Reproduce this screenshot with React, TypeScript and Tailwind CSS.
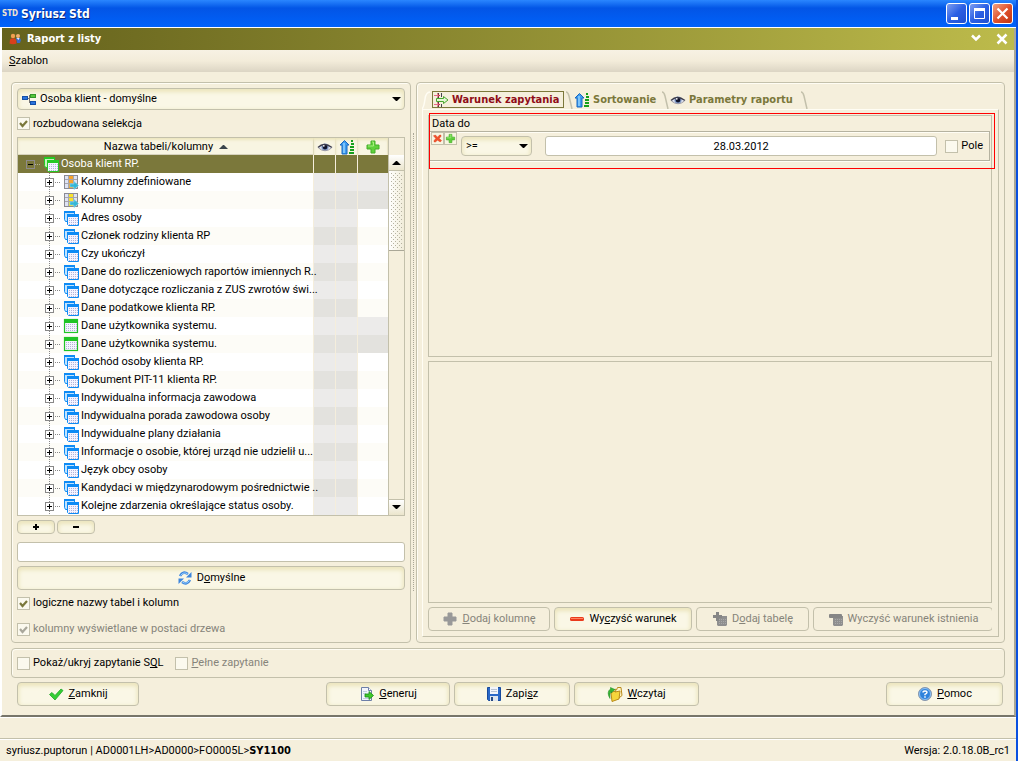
import type { ReactNode } from 'react';
import clsx from 'clsx';

type IconName =
  | 'eye' | 'sort' | 'plus' | 'plusGray' | 'minus' | 'tables' | 'tablesGreen' | 'tableGreen'
  | 'columnsOrange' | 'columnsYellow' | 'refresh' | 'check' | 'generate' | 'save' | 'folder'
  | 'help' | 'hierarchy' | 'condition' | 'tableAdd' | 'tableRemove' | 'users' | 'cross';

function Dots({ x, y, cols, rows, color }: { x: number; y: number; cols: number; rows: number; color: string }) {
  const cells: ReactNode[] = [];
  for (let r = 0; r < rows; r++) {
    for (let c = 0; c < cols; c++) {
      cells.push(<rect key={`${r}-${c}`} x={x + c * 2} y={y + r * 2} width="1" height="1" fill={color} />);
    }
  }
  return <>{cells}</>;
}

function Columns({ accent }: { accent: string }) {
  return (
    <>
      <rect x="1.5" y="1.5" width="13" height="13" fill="#dfe3f4" stroke="#8b8b93" />
      <rect x="6" y="2" width="4" height="12" fill={accent} />
      <path d="M5.5 2v12M10.5 2v12M2 5.5h12M2 9.5h12" stroke="#a6a6ae" strokeWidth="1" fill="none" />
      <path d="M7 10h4V7.500l4.500 4L11 15.500V13H7z" fill="#35b6d6" stroke="#7fdcee" strokeWidth=".6" />
    </>
  );
}

function Tables({ main, light }: { main: string; light: string }) {
  return (
    <>
      <path d="M1.500 1.500h10v10h-9l-1-2z" fill={light} stroke={main} />
      <rect x="1" y="1" width="11" height="2" fill={main} />
      <path d="M4.500 4.500h11v11h-10l-1-1z" fill="#f4f4ff" stroke={main} />
      <rect x="4" y="4" width="12" height="3" fill={main} />
      <Dots x={6} y={8} cols={5} rows={4} color="#b4b2d8" />
    </>
  );
}

function GrayTable() {
  return (
    <>
      <path d="M5 5h10v9l-1 1H6l-1-1z" fill="#8f8f8f" />
      <Dots x={7} y={8} cols={4} rows={3} color="#a8a8a8" />
    </>
  );
}

const drawings: Record<IconName, ReactNode> = {
  eye: (
    <>
      <path d="M1 8.500Q7 3 15 8.500Q8 14 1 8.500z" fill="#e4e7f2" />
      <circle cx="8" cy="8" r="3.600" fill="#7c95c4" />
      <circle cx="8" cy="8" r="2.400" fill="#10142c" />
      <path d="M1 8.500Q7 2.500 15 8.500" fill="none" stroke="#3c3c4c" strokeWidth="1.400" />
      <path d="M1.500 9Q8 14.500 14.500 9" fill="none" stroke="#9a9aa6" strokeWidth="1" />
      <circle cx="6.800" cy="6.800" r=".9" fill="#fff" />
    </>
  ),
  sort: (
    <>
      <path d="M5.500 1.500L10 6H8v9H3V6H1z" fill="#3d9cf0" stroke="#1767c0" strokeWidth="1" />
      <path d="M5 4v10" stroke="#92d2ff" strokeWidth="1.500" />
      <path d="M12 2h2M12 5h3M11 8h4M11 11h4M10 14h5" stroke="#15a01c" strokeWidth="2" />
    </>
  ),
  plus: (
    <>
      <path d="M6 2h4v4h4v4h-4v4H6v-4H2V6h4z" fill="#5fd13c" stroke="#45ad29" strokeWidth="1" strokeLinejoin="round" />
      <path d="M7 3h1.500v4H3" fill="none" stroke="#a6f07f" strokeWidth="1" />
    </>
  ),
  plusGray: <path d="M6 2h4v4h4v4h-4v4H6v-4H2V6h4z" fill="#999" stroke="#999" strokeWidth="1" strokeLinejoin="round" />,
  minus: (
    <>
      <rect x="1" y="6" width="14" height="4" rx="1.500" fill="#ea3a1c" />
      <rect x="2" y="7" width="12" height="1" fill="#ff8464" />
    </>
  ),
  tables: <Tables main="#0e8bf5" light="#bfe3ff" />,
  tablesGreen: <Tables main="#25c925" light="#c8f3c0" />,
  tableGreen: (
    <>
      <rect x="1.500" y="1.500" width="13" height="13" fill="#f4f4ff" stroke="#1fc426" strokeWidth="1.200" />
      <rect x="2" y="2" width="12" height="3" fill="#1fc426" />
      <Dots x={3} y={6} cols={6} rows={4} color="#b4b2d8" />
    </>
  ),
  columnsOrange: <Columns accent="#f8a52c" />,
  columnsYellow: <Columns accent="#f8e22c" />,
  refresh: (
    <>
      <path d="M3 6Q6 .5 11 4" fill="none" stroke="#3d86dd" strokeWidth="2.600" />
      <path d="M14.500 2v5.500H9z" fill="#3d86dd" />
      <path d="M13 10Q10 15.500 5 12" fill="none" stroke="#3d86dd" strokeWidth="2.600" />
      <path d="M1.500 14V8.500H7z" fill="#3d86dd" />
      <path d="M3.500 5.500Q6.500 1.500 10.500 3.800M12.500 10.500Q9.500 14.500 5.500 12.200" fill="none" stroke="#9bd0ff" strokeWidth="1" />
    </>
  ),
  check: <path d="M1.500 8.500L4 6.500l3 3 6-6.500 2 1.500-8 9.500z" fill="#35cf35" stroke="#20a527" strokeWidth=".8" />,
  generate: (
    <>
      <path d="M2.500 1.500h7l3 3v10h-10z" fill="#f2f5fc" stroke="#6d7fa8" />
      <path d="M9.500 1.500v3h3" fill="#fff" stroke="#6d7fa8" />
      <path d="M4 5.500h4M4 7.500h3M4 12.500h6" stroke="#c3cce2" />
      <path d="M6 8h4V5.500l4.500 4L10 13.500V11H6z" fill="#40c92b" stroke="#168a17" strokeWidth=".8" />
    </>
  ),
  save: (
    <>
      <path d="M1.500 1.500h13v13h-12l-1-1z" fill="#2a68c8" stroke="#184a9c" />
      <rect x="4" y="1" width="8" height="7" fill="#f3f5fa" />
      <path d="M5 3.500h6M5 5.500h6" stroke="#b8c2d4" />
      <rect x="4" y="10" width="8" height="5" fill="#dfe5ee" />
      <rect x="5" y="11" width="2" height="4" fill="#274a82" />
    </>
  ),
  folder: (
    <>
      <path d="M8 3l1.500 1 1-2.500H14l1 8-5 4z" fill="#fff6c8" stroke="#b98a1a" />
      <path d="M4 7l3-2 1 1 5-1-1 8-7 2.500z" fill="#f5d53c" stroke="#b98a1a" />
      <path d="M3 12.500Q-1 6 3.500 3V1.500L8 3.500 4 7V5.500Q2.500 7 3 12.500z" fill="#35b535" stroke="#1d831d" strokeWidth=".5" />
    </>
  ),
  help: (
    <>
      <circle cx="8" cy="8" r="6.500" fill="#2f83dc" stroke="#8a97aa" strokeWidth="1" />
      <circle cx="8" cy="8" r="5.500" fill="none" stroke="#a9d3fa" strokeWidth=".8" />
      <path d="M6 6.500Q6 5 8 5T10 6.500Q10 7.300 8 8.300v1" fill="none" stroke="#fff" strokeWidth="1.400" />
      <rect x="7.200" y="10.300" width="1.600" height="1.400" fill="#fff" />
    </>
  ),
  hierarchy: (
    <>
      <path d="M5 7.500h4M8.500 5v6M8 4.500h2M8 11.500h2" stroke="#777" fill="none" />
      <rect x="1.500" y="5.500" width="5" height="3" fill="#2a74dd" stroke="#1450a8" />
      <rect x="9.500" y="3.500" width="5" height="3" fill="#57c83c" stroke="#35962a" />
      <rect x="9.500" y="10.500" width="5" height="3" fill="#2a74dd" stroke="#1450a8" />
    </>
  ),
  condition: (
    <>
      <path d="M5.500 1v14M8.500 1v4M8.500 12v3" stroke="#44444c" />
      <path d="M1 3.500h6M1 12.500h6" stroke="#e46a86" />
      <path d="M4 1.500l2.500 2L4 5.500M4 10.500l2.500 2L4 14.500" fill="none" stroke="#b3243c" />
      <path d="M3.500 6.500h7v-2l4.500 3.500-4.500 3.500v-2h-7z" fill="#e3f7d4" stroke="#48a82e" />
    </>
  ),
  tableAdd: (
    <>
      <GrayTable />
      <path d="M4 1h3v3h3v3H7v3H4V7H1V4h3z" fill="#868686" />
    </>
  ),
  tableRemove: (
    <>
      <GrayTable />
      <rect x="1" y="3" width="13" height="4" rx="1" fill="#868686" />
    </>
  ),
  users: (
    <>
      <circle cx="11" cy="5" r="2" fill="#f0b070" />
      <path d="M9 7h4l1 2-1 3h-3z" fill="#3a6cc8" />
      <path d="M9.500 7l2 2 1-2z" fill="#e8eefc" />
      <circle cx="6" cy="5" r="2.200" fill="#f0a050" />
      <path d="M2.500 12.500L3 8.500Q6 6 9 8.500l.5 4Q6 14 2.500 12.500z" fill="#d8401c" />
    </>
  ),
  cross: <path d="M2 4l3-1 3 3 3-3h2v2l-2.500 3L14 11l-2 2-4-2.500L5 13H3v-2l2.500-3z" fill="#f0522c" stroke="#d83818" strokeWidth=".6" />,
};

function Icon({ name, className = 'size-4' }: { name: IconName; className?: string }) {
  return (
    <svg viewBox="0 0 16 16" className={clsx('shrink-0', className)} aria-hidden="true">
      {drawings[name]}
    </svg>
  );
}

function Caret({ up = false, className }: { up?: boolean; className?: string }) {
  return (
    <svg viewBox="0 0 9 5" className={clsx('h-[5px] w-[9px] shrink-0', className)} aria-hidden="true">
      <path d={up ? 'M0 5h9L5 1H4z' : 'M0 0h9L5 4H4z'} fill="currentColor" />
    </svg>
  );
}

const glossy =
  'rounded-[4px] border border-[#c3c0ab] bg-[#faf7e6] shadow-[inset_0_2px_4px_1px_#ece5bd,inset_0_4px_2px_-1px_#f8f5e2]';

type PushButtonProps = {
  className?: string;
  icon?: IconName;
  disabled?: boolean;
  children: ReactNode;
};

function PushButton({ className, icon, disabled, children }: PushButtonProps) {
  return (
    <button
      type="button"
      disabled={disabled}
      className={clsx(
        'flex h-6 shrink-0 items-center justify-center gap-1 whitespace-nowrap',
        disabled ? 'rounded-[4px] border border-[#c3c0ab] text-[#86847a]' : glossy,
        className,
      )}
    >
      {icon && <Icon name={icon} />}
      <span>{children}</span>
    </button>
  );
}

type TickBoxProps = { id: string; checked?: boolean; disabled?: boolean; className?: string; children: ReactNode };

function TickBox({ id, checked = false, disabled, className, children }: TickBoxProps) {
  return (
    <div className={clsx('flex items-center gap-[3px]', className)}>
      <span className="relative size-[13px]">
        <input
          id={id}
          type="checkbox"
          defaultChecked={checked}
          disabled={disabled}
          className="peer block size-[13px] appearance-none border border-[#c3c0ab] bg-[#fbf9ee]"
        />
        <svg
          viewBox="0 0 13 13"
          className={clsx(
            'pointer-events-none absolute inset-0 hidden peer-checked:block',
            disabled ? 'text-[#a9a79b]' : 'text-[#7b783b]',
          )}
          aria-hidden="true"
        >
          <path d="M3 6l2.500 3L10 4" fill="none" stroke="currentColor" strokeWidth="2.200" />
        </svg>
      </span>
      <label htmlFor={id} className={clsx('whitespace-nowrap', disabled && 'text-[#86847a]')}>
        {children}
      </label>
    </div>
  );
}

type Row = { label: string; icon: IconName; locked?: boolean };

const rows: Row[] = [
  { label: 'Kolumny zdefiniowane', icon: 'columnsOrange', locked: true },
  { label: 'Kolumny', icon: 'columnsYellow', locked: true },
  { label: 'Adres osoby', icon: 'tables' },
  { label: 'Członek rodziny klienta RP', icon: 'tables' },
  { label: 'Czy ukończył', icon: 'tables' },
  { label: 'Dane do rozliczeniowych raportów imiennych R..', icon: 'tables' },
  { label: 'Dane dotyczące rozliczania z ZUS zwrotów świ...', icon: 'tables' },
  { label: 'Dane podatkowe klienta RP.', icon: 'tables' },
  { label: 'Dane użytkownika systemu.', icon: 'tableGreen', locked: true },
  { label: 'Dane użytkownika systemu.', icon: 'tableGreen', locked: true },
  { label: 'Dochód osoby klienta RP.', icon: 'tables' },
  { label: 'Dokument PIT-11 klienta RP.', icon: 'tables' },
  { label: 'Indywidualna informacja zawodowa', icon: 'tables' },
  { label: 'Indywidualna porada zawodowa osoby', icon: 'tables' },
  { label: 'Indywidualne plany działania', icon: 'tables' },
  { label: 'Informacje o osobie, której urząd nie udzielił u...', icon: 'tables' },
  { label: 'Język obcy osoby', icon: 'tables' },
  { label: 'Kandydaci w międzynarodowym pośrednictwie ..', icon: 'tables' },
  { label: 'Kolejne zdarzenia określające status osoby.', icon: 'tables' },
];

function TreeTable() {
  return (
    <div className="flex border border-[#c3c0ab] bg-white">
      <div className="min-w-0 flex-1">
        <table className="w-full table-fixed border-separate border-spacing-0">
          <colgroup>
            <col />
            <col className="w-[22px]" />
            <col className="w-[22px]" />
            <col className="w-[30px]" />
          </colgroup>
          <thead>
            <tr className="h-[17px] bg-[#f8f5e2]">
              <th className="p-0 font-normal shadow-[inset_0_2px_3px_#ece5bd,inset_-1px_-1px_0_#d5d2bc]">
                <span className="flex h-[17px] items-center justify-center gap-[6px]">
                  Nazwa tabeli/kolumny
                  <Caret up className="text-[#3a444c]" />
                </span>
              </th>
              {(['eye', 'sort', 'plus'] as const).map((name) => (
                <th key={name} className="p-0 shadow-[inset_0_2px_3px_#ece5bd,inset_-1px_0_0_#e8e3cc]">
                  <Icon name={name} className="mx-auto size-4" />
                </th>
              ))}
            </tr>
          </thead>
          <tbody>
            <tr className="h-[18px] bg-[#7b783b] text-white">
              <td className="border-r border-[#f5eedc] p-0">
                <span className="flex h-[18px] items-center gap-[2px] whitespace-nowrap">
                  <svg viewBox="0 0 23 18" className="h-[18px] w-[23px] shrink-0" aria-hidden="true">
                    <rect x="8.500" y="5.500" width="8" height="8" fill="none" stroke="#8e8b8c" />
                    <path d="M10 9.500h5" stroke="#000" />
                    <path d="M17 9.500h6" stroke="#b5b291" strokeDasharray="1 1" />
                  </svg>
                  <Icon name="tablesGreen" />
                  Osoba klient RP.
                </span>
              </td>
              <td className="border-r border-[#f5eedc] p-0" />
              <td className="border-r border-[#f5eedc] p-0" />
              <td className="p-0" />
            </tr>
            {rows.map((row, i) => {
              const gray = i % 2 ? 'bg-[#e3e2de]' : 'bg-[#ecebea]';
              return (
                <tr key={i} className={clsx('h-[18px]', i % 2 ? 'bg-[#fdfcf7]' : 'bg-white')}>
                  <td className="border-r border-[#f5eedc] p-0">
                    <span className="flex h-[18px] items-center gap-[2px] whitespace-nowrap">
                      <svg viewBox="0 0 43 18" className="h-[18px] w-[43px] shrink-0" aria-hidden="true">
                        <path d="M31.500 0v18" stroke="#888" strokeDasharray="1 1" />
                        <path d="M37 9.500h6" stroke="#888" strokeDasharray="1 1" />
                        <rect x="27.500" y="5.500" width="8" height="8" fill="#fff" stroke="#888" />
                        <path d="M29 9.500h5M31.500 7v5" stroke="#000" />
                      </svg>
                      <Icon name={row.icon} />
                      {row.label}
                    </span>
                  </td>
                  <td className={clsx('border-r border-[#f5eedc] p-0', gray)} />
                  <td className={clsx('border-r border-[#f5eedc] p-0', gray)} />
                  <td className={clsx('p-0', row.locked && gray)} />
                </tr>
              );
            })}
          </tbody>
        </table>
      </div>

      {/* Scrollbar */}
      <div className="flex w-4 shrink-0 flex-col border-l border-[#c3c0ab] bg-[#f5efdc] pt-[17px]">
        <button
          type="button"
          aria-label="Przewiń w górę"
          className="flex h-4 items-center justify-center border-b border-[#c3c0ab] bg-linear-to-b from-white to-[#ebe5cc]"
        >
          <Caret up />
        </button>
        <div className="h-20 border-b border-[#aaa797] bg-linear-to-r from-white to-[#f1ecd8] p-[2px]">
          <svg className="size-full" aria-hidden="true">
            <defs>
              <pattern id="grip" width="4" height="4" patternUnits="userSpaceOnUse">
                <rect width="1" height="1" fill="#b5b2a0" />
                <rect x="2" y="2" width="1" height="1" fill="#b5b2a0" />
              </pattern>
            </defs>
            <rect width="100%" height="100%" fill="url(#grip)" />
          </svg>
        </div>
        <div className="flex-1" />
        <button
          type="button"
          aria-label="Przewiń w dół"
          className="flex h-4 items-center justify-center border-t border-[#c3c0ab] bg-linear-to-b from-white to-[#ebe5cc]"
        >
          <Caret />
        </button>
      </div>
    </div>
  );
}

function LeftPanel() {
  return (
    <section className="flex w-[400px] shrink-0 flex-col rounded-[4px] border border-[#c3c0ab] px-[5px] pt-[5px] shadow-[inset_1px_1px_0_#fffdf4]">
      <div className="relative h-[22px]">
        <select aria-label="Szablon raportu" className={clsx('h-[22px] w-full appearance-none pl-[22px]', glossy)}>
          <option>Osoba klient - domyślne</option>
        </select>
        <Icon name="hierarchy" className="pointer-events-none absolute top-[3px] left-1 size-4" />
        <Caret className="pointer-events-none absolute top-[9px] right-1" />
      </div>
      <TickBox id="extended" checked className="h-[27px]">rozbudowana selekcja</TickBox>
      <TreeTable />
      <div className="mt-1 flex gap-[2px]">
        {(['+', '-'] as const).map((sign) => (
          <button
            key={sign}
            type="button"
            aria-label={sign === '+' ? 'Rozwiń' : 'Zwiń'}
            className={clsx('flex h-[14px] w-[38px] items-center justify-center', glossy)}
          >
            <svg viewBox="0 0 6 6" className="size-[6px]" aria-hidden="true">
              <path d={sign === '+' ? 'M0 3h6M3 0v6' : 'M0 3h6'} stroke="#000" strokeWidth="2" />
            </svg>
          </button>
        ))}
      </div>
      <input type="text" aria-label="Szukaj" className="mt-2 h-5 rounded-[3px] border border-[#c3c0ab] bg-white px-1" />
      <PushButton icon="refresh" className="mt-1">D<u>o</u>myślne</PushButton>
      <TickBox id="logical" checked className="h-[26px]">logiczne nazwy tabel i kolumn</TickBox>
      <TickBox id="tree" checked disabled className="h-[26px]">kolumny wyświetlane w postaci drzewa</TickBox>
    </section>
  );
}

function TabEdge({ mirrored = false }: { mirrored?: boolean }) {
  return (
    <svg viewBox="0 0 8 18" className="h-[18px] w-2 shrink-0" aria-hidden="true">
      <path
        d={mirrored ? 'M0 18Q2 16 3 8Q4 1 8 1' : 'M0 1Q2 1 3 5L6 18'}
        fill="none"
        stroke={mirrored ? '#fffdf4' : '#c3c0ab'}
        strokeWidth="1.500"
      />
    </svg>
  );
}

function Tabs() {
  const tab = 'flex h-[17px] items-center gap-[3px] whitespace-nowrap';
  return (
    <div
      role="tablist"
      className="flex h-[18px] items-start pl-[5px] font-['DejaVu_Sans_Condensed','DejaVu_Sans',sans-serif] font-bold text-[#7b783b]"
    >
      <TabEdge mirrored />
      <button
        type="button"
        role="tab"
        aria-selected="true"
        className={clsx('mx-[2px] w-[132px] border border-[#7b783b] text-[#8f0d17]', tab)}
      >
        <Icon name="condition" />
        Warunek zapytania
      </button>
      <TabEdge />
      <button type="button" role="tab" aria-selected="false" className={clsx('w-[88px]', tab)}>
        <Icon name="sort" />
        Sortowanie
      </button>
      <TabEdge />
      <button type="button" role="tab" aria-selected="false" className={clsx('w-[131px]', tab)}>
        <Icon name="eye" />
        Parametry raportu
      </button>
      <TabEdge />
    </div>
  );
}

function RightPanel() {
  const mini = 'flex size-[13px] items-center justify-center border border-[#c3c0ab] bg-[#f8f5e2]';
  return (
    <section className="flex min-w-0 flex-1 flex-col rounded-[4px] border border-[#c3c0ab] pt-2 pb-[5px] shadow-[inset_1px_1px_0_#fffdf4]">
      <Tabs />
      <div className="mx-[5px] flex flex-1 flex-col border border-t-[#fffdf4] border-r-[#c3c0ab] border-b-[#c3c0ab] border-l-[#fffdf4] py-[5px] pr-[6px] pl-[5px]">
        <div className="relative flex-1 border border-[#c3c0ab]">
          <h2 className="h-[15px] pl-[3px] leading-[15px]">Data do</h2>
          <div className="mr-px flex h-[30px] border-y border-r border-[#b5b2a0] shadow-[0_1px_0_#fffdf4,inset_0_1px_0_#fffdf4]">
            <button type="button" aria-label="Usuń warunek" className={clsx('ml-[2px]', mini)}>
              <Icon name="cross" className="size-[11px]" />
            </button>
            <button type="button" aria-label="Dodaj warunek" className={mini}>
              <Icon name="plus" className="size-[11px]" />
            </button>
            <div className="relative mt-1 ml-1 h-5">
              <select aria-label="Operator" className={clsx('h-5 w-[71px] appearance-none pl-1', glossy)}>
                <option>&gt;=</option>
              </select>
              <Caret className="pointer-events-none absolute top-2 right-1" />
            </div>
            <input
              type="text"
              aria-label="Data do"
              defaultValue="28.03.2012"
              className="mt-1 ml-[13px] h-5 min-w-0 flex-1 rounded-[3px] border border-[#c3c0ab] bg-white text-center"
            />
            <TickBox id="field" className="mr-[6px] ml-2">Pole</TickBox>
          </div>
          <div className="pointer-events-none absolute -top-[3px] -right-1 left-0 h-14 border border-[#ff0000]" />
        </div>
        <div className="mt-1 flex-1 border border-[#c3c0ab]" />
        <div className="mt-1 flex gap-1 overflow-hidden">
          <PushButton icon="plusGray" disabled className="w-[122px]"><u>D</u>odaj kolumnę</PushButton>
          <PushButton icon="minus" className="w-[138px]">Wy<u>c</u>zyść warunek</PushButton>
          <PushButton icon="tableAdd" disabled className="w-[113px]">D<u>o</u>daj tabelę</PushButton>
          <PushButton icon="tableRemove" disabled className="w-[180px]">Wyczyść warunek istnienia</PushButton>
        </div>
      </div>
    </section>
  );
}

function WindowButton({ label, danger = false, children }: { label: string; danger?: boolean; children: ReactNode }) {
  return (
    <button
      type="button"
      aria-label={label}
      className={clsx(
        'size-[21px] rounded-[3px] border border-white bg-linear-to-br',
        danger ? 'from-[#f0a080] via-[#e0522c] to-[#c03410]' : 'from-[#7d9cf0] via-[#2b5fe4] to-[#1f4fd0]',
      )}
    >
      <svg viewBox="0 0 19 19" className="size-full" fill="none" stroke="#fff" aria-hidden="true">
        {children}
      </svg>
    </button>
  );
}

export default function App() {
  return (
    <div className="flex min-h-screen flex-col border-r-2 border-[#0a50e0] bg-[#f5efdc] font-['Roboto',sans-serif] text-[11px] leading-[14px] text-black">
      <header className="flex h-7 items-center gap-[2px] border-b border-white bg-linear-to-b from-[#2a86ff] via-[#0355e6] via-30% to-[#0062fa] pl-[2px] font-['DejaVu_Sans_Condensed','DejaVu_Sans',sans-serif] text-white">
        <span className="w-[17px] text-[8px] font-bold text-[#f2e4d0]">STD</span>
        <h1 className="flex-1 text-[12px] font-bold [text-shadow:1px_1px_0_#0a2a80]">Syriusz Std</h1>
        <div className="flex gap-[2px]">
          <WindowButton label="Minimalizuj"><path d="M4 14.500h7" strokeWidth="3" /></WindowButton>
          <WindowButton label="Maksymalizuj">
            <path d="M4.500 5v9.500h10V5" />
            <path d="M4 5.500h11" strokeWidth="3" />
          </WindowButton>
          <WindowButton label="Zamknij okno" danger><path d="M4.500 4.500l10 10m0-10l-10 10" strokeWidth="2.200" /></WindowButton>
        </div>
        <div className="w-px" />
      </header>

      <main className="flex flex-1 flex-col border-r-2 border-b-2 border-l-2 border-r-[#aaa797] border-b-[#77756a] border-l-white">
        <div className="flex h-[22px] items-center bg-linear-to-r from-[#65621c] to-[#bdbb4b] pr-[6px] pl-[5px] text-white">
          <Icon name="users" />
          <h2 className="ml-1 flex-1 font-['DejaVu_Sans_Condensed','DejaVu_Sans',sans-serif] font-bold">Raport z listy</h2>
          <button type="button" aria-label="Zwiń" className="mr-[14px]">
            <svg viewBox="0 0 12 12" className="size-3" fill="none" stroke="#fff" strokeWidth="2.500" aria-hidden="true">
              <path d="M2 2.500l4 4 4-4" />
            </svg>
          </button>
          <button type="button" aria-label="Zamknij raport">
            <svg viewBox="0 0 12 12" className="size-3" fill="none" stroke="#fff" strokeWidth="2.500" aria-hidden="true">
              <path d="M1.500 1.500l9 9m0-9l-9 9" />
            </svg>
          </button>
        </div>
        <nav className="flex h-[22px] items-center bg-linear-to-b from-[#f7f2e4] via-[#f3ecda] to-[#dcd5c4] pl-[7px]">
          <button type="button"><u>S</u>zablon</button>
        </nav>

        <div className="flex flex-1 flex-col px-[9px] pt-[10px] pb-[9px]">
          <div className="flex flex-1">
            <LeftPanel />
            <div className="flex w-[5px] shrink-0 justify-center pt-[51px] pb-[52px]">
              <div className="border-l border-dotted border-[#aaa797]" />
            </div>
            <RightPanel />
          </div>
          <section className="mt-[5px] flex h-[30px] items-center gap-3 rounded-[4px] border border-[#c3c0ab] px-[5px] shadow-[inset_1px_1px_0_#fffdf4]">
            <TickBox id="sql">Pokaż/ukryj zapytanie S<u>Q</u>L</TickBox>
            <TickBox id="full" disabled><u>P</u>ełne zapytanie</TickBox>
          </section>
          <div className="mt-1 flex justify-between pr-[2px] pl-[6px]">
            <PushButton icon="check" className="w-[122px]"><u>Z</u>amknij</PushButton>
            <div className="flex gap-1">
              <PushButton icon="generate" className="w-[124px]"><u>G</u>eneruj</PushButton>
              <PushButton icon="save" className="w-[116px]">Zapi<u>s</u>z</PushButton>
              <PushButton icon="folder" className="w-[125px]"><u>W</u>czytaj</PushButton>
            </div>
            <PushButton icon="help" className="w-[117px]"><u>P</u>omoc</PushButton>
          </div>
        </div>
      </main>

      <div className="h-[22px] border-t border-b border-t-white border-b-[#c3c0ab]" />
      <footer className="flex h-[22px] items-center justify-between border-t border-white px-[6px]">
        <p>
          syriusz.puptorun | AD0001LH&gt;AD0000&gt;FO0005L&gt;
          <b className="font-['DejaVu_Sans_Condensed','DejaVu_Sans',sans-serif]">SY1100</b>
        </p>
        <p>Wersja: 2.0.18.0B_rc1</p>
      </footer>
    </div>
  );
}
